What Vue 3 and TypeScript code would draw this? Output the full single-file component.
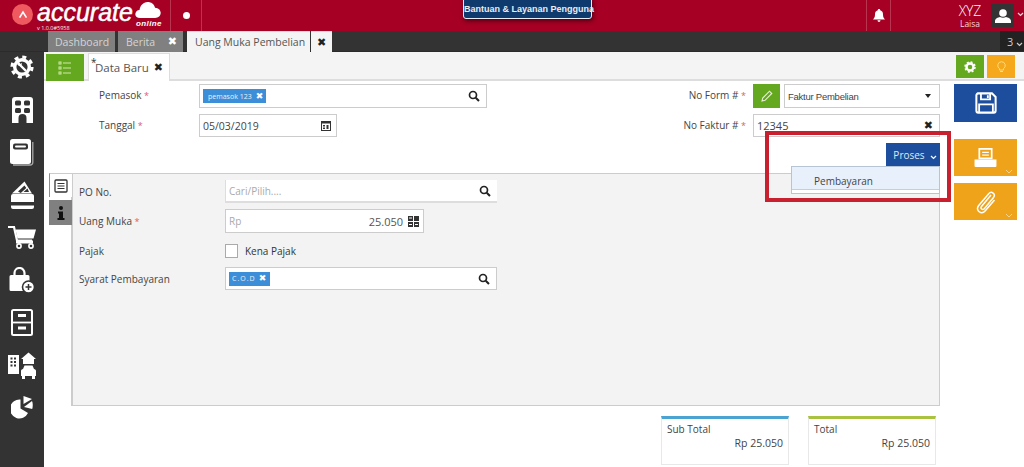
<script setup lang="ts">
interface NavIcon { id: string }
const navIcons: NavIcon[] = [
  { id: 'gear' }, { id: 'building' }, { id: 'book' }, { id: 'wallet' }, { id: 'cart' },
  { id: 'bag' }, { id: 'cabinet' }, { id: 'assets' }, { id: 'pie' },
]
</script>

<template>
  <div class="app">
    <header class="topbar">
      <div class="logo">
        <span class="logo-mark">
          <svg width="10" height="9" viewBox="0 0 16 12"><path d="M2.5 11 8 2l5.500 9" fill="none" stroke="#fff" stroke-width="2.600" /></svg>
        </span>
        <span class="logo-word">accurate</span>
        <span class="logo-cloud">
          <svg width="26" height="16" viewBox="0 0 27 17"><path d="M5 17c-3 0-5-1.800-5-4s2-4.500 4.500-4.500C5 4 8.500 0 13 0c4 0 7 2.200 8 6 3.500.2 6 2.500 6 5.500S24.500 17 21 17z" fill="#fff" /></svg>
          <em>online</em>
        </span>
        <span class="version">v 1.0.0#5958</span>
      </div>
      <div class="dot-cell"><span class="dot"></span></div>
      <div class="spacer"></div>
      <div class="bell-cell">
        <svg width="12" height="13" viewBox="0 0 12 13"><path d="M6 0c.8 0 1.200.5 1.200 1.200C9.300 1.800 10 3.500 10 5.500c0 2.500.8 3.500 2 5H0c1.200-1.500 2-2.500 2-5 0-2 .7-3.700 2.800-4.300C4.800.5 5.200 0 6 0zM4.500 11.300h3C7.400 12.300 6.800 13 6 13s-1.400-.7-1.500-1.700z" fill="#fff" /></svg>
      </div>
      <div class="user-name"><span class="xyz">XYZ</span><span class="laisa">Laisa</span></div>
      <div class="avatar">
        <svg width="16" height="14" viewBox="0 0 16 14"><circle cx="8" cy="4" r="3.800" fill="#fff" /><path d="M0 14v-2c0-2.500 3-3.500 5-4 1.800 1 4.200 1 6 0 2 .5 5 1.500 5 4v2z" fill="#fff" /></svg>
      </div>
      <svg class="user-chev" width="7" height="5" viewBox="0 0 7 5"><path d="m1 1 2.500 2.500L6 1" fill="none" stroke="#ddd" stroke-width="1.200" /></svg>
      <div class="help">Bantuan &amp; Layanan Pengguna</div>
    </header>

    <nav class="tabs">
      <div class="tab tab-dash">Dashboard</div>
      <div class="tab tab-news">Berita <b class="x">✖</b></div>
      <div class="tab tab-active">Uang Muka Pembelian</div>
      <div class="tab tab-close"><b class="x dark">✖</b></div>
      <div class="spacer"></div>
      <div class="tab-count">3<svg width="7" height="5" viewBox="0 0 7 5"><path d="m1 1 2.500 2.500L6 1" fill="none" stroke="#ccc" stroke-width="1.200" /></svg></div>
    </nav>

    <div class="body">
      <aside class="sidebar">
        <div v-for="icon in navIcons" :key="icon.id" class="nav-item">
          <svg v-if="icon.id === 'gear'" width="24" height="24" viewBox="0 0 24 24">
            <circle cx="12" cy="12" r="10" fill="none" stroke="#fff" stroke-width="3.200" stroke-dasharray="4 3.850" />
            <circle cx="12" cy="12" r="7.300" fill="none" stroke="#fff" stroke-width="3.400" />
            <path d="M8.500 8.500l7.500 7.500" stroke="#fff" stroke-width="2.400" />
            <path d="M7.200 9.200a3 3 0 0 1 3-3l-1 1.800 1 1 1.800-1a3 3 0 0 1-3 3z" fill="#fff" />
          </svg>
          <svg v-else-if="icon.id === 'building'" width="21" height="26" viewBox="0 0 21 26">
            <path d="M3 0h15a3 3 0 0 1 3 3v23h-6.500v-5a4 4 0 0 0-8 0v5H0V3a3 3 0 0 1 3-3z" fill="#fff" />
            <rect x="3" y="3.500" width="6" height="5" rx="1.500" fill="#333" /><rect x="12" y="3.500" width="6" height="5" rx="1.500" fill="#333" />
            <rect x="3" y="11" width="6" height="5" rx="1.500" fill="#333" /><rect x="12" y="11" width="6" height="5" rx="1.500" fill="#333" />
          </svg>
          <svg v-else-if="icon.id === 'book'" width="24" height="27" viewBox="0 0 24 27">
            <rect x="0" y="0" width="21" height="25" rx="2.500" fill="#fff" />
            <rect x="3" y="4.500" width="15" height="6" rx="2" fill="#333" />
            <rect x="5" y="6.500" width="11" height="2" rx="1" fill="#fff" />
            <path d="M22.800 3v20.500a2.500 2.500 0 0 1-2.500 2.500H3" fill="none" stroke="#aaa" stroke-width="1.300" />
          </svg>
          <svg v-else-if="icon.id === 'wallet'" width="23" height="28" viewBox="0 0 23 28">
            <path d="M1 12.500 13.500 0.500 21 12.500z" fill="#fff" />
            <path d="m7 10.500 6.500-6 1.800 2.600-5.500 4.800zM12.500 11l4-3.500 1.500 3.500z" fill="#333" />
            <path d="M2 13h19a2 2 0 0 1 2 2v11a2 2 0 0 1-2 2H2a2 2 0 0 1-2-2V15a2 2 0 0 1 2-2z" fill="#fff" />
            <rect x="0" y="21" width="23" height="3.500" fill="#333" />
          </svg>
          <svg v-else-if="icon.id === 'cart'" width="28" height="23" viewBox="0 0 28 23">
            <path d="M0 1h6l3 13.500h15" fill="none" stroke="#fff" stroke-width="2.200" />
            <path d="M7.500 3.500H28l-2.500 9H9.500z" fill="#fff" />
            <rect x="8" y="14.500" width="17" height="3" fill="#fff" />
            <circle cx="11" cy="20" r="2.100" fill="none" stroke="#fff" stroke-width="1.600" /><circle cx="23" cy="20" r="2.100" fill="none" stroke="#fff" stroke-width="1.600" />
          </svg>
          <svg v-else-if="icon.id === 'bag'" width="26" height="26" viewBox="0 0 26 26">
            <path d="M5.500 9V6a5 5 0 0 1 10 0v3" fill="none" stroke="#fff" stroke-width="2.200" />
            <path d="M2 8h17a1.500 1.500 0 0 1 1.500 1.500V24H2a1.500 1.500 0 0 1-1.500-1.500v-13A1.500 1.500 0 0 1 2 8z" fill="#fff" />
            <circle cx="19.500" cy="20" r="6" fill="#fff" stroke="#333" stroke-width="1.600" />
            <path d="M16.500 20h6M19.500 17v6" stroke="#333" stroke-width="1.500" />
          </svg>
          <svg v-else-if="icon.id === 'cabinet'" width="22" height="27" viewBox="0 0 22 27">
            <rect x="1" y="1" width="20" height="25" rx="1.500" fill="none" stroke="#fff" stroke-width="2" />
            <path d="M1 13.500h20" stroke="#fff" stroke-width="1.800" />
            <rect x="7" y="5" width="8" height="3" fill="#fff" /><rect x="7" y="17.500" width="8" height="3" fill="#fff" />
          </svg>
          <svg v-else-if="icon.id === 'assets'" width="28" height="29" viewBox="0 0 28 29">
            <path d="M0 4h11v19H0z" fill="#fff" />
            <path d="M2.500 6.500h2v2h-2zM6 6.500h2v2H6zM2.500 10h2v2h-2zM6 10h2v2H6zM2.500 13.500h2v2h-2zM6 13.500h2v2H6z" fill="#333" />
            <path d="m13 8 7.500-6.500L28 8h-2v5H15V8z" fill="#fff" />
            <path d="M15 18l1.500-3.500h8L26 18c1.200.3 2 1 2 2v5h-1v3h-3v-3h-7v3h-3v-3h-1v-5c0-1 .8-1.700 2-2z" fill="#fff" />
          </svg>
          <svg v-else width="22" height="23" viewBox="0 0 22 23">
            <path d="M9.500 3.500v9l7.500 4.500a9.500 9.500 0 1 1-7.500-13.500z" fill="#fff" />
            <path d="M12.500 8V0L21 3z" fill="#fff" />
            <path d="M13 11l8-6c1 2 1 6 .2 8z" fill="#fff" />
          </svg>
        </div>
      </aside>

      <main class="main">
        <div class="toolbar">
          <button class="list-btn" type="button">
            <svg width="14" height="14" viewBox="0 0 14 14"><g fill="none" stroke="#cfe8a8" stroke-width="1"><rect x="1" y="1" width="2" height="2" /><rect x="1" y="6" width="2" height="2" /><rect x="1" y="11" width="2" height="2" /><path d="M5 2h8M5 7h8M5 12h8" /></g></svg>
          </button>
          <div class="doc-tab"><sup>*</sup>Data Baru <b class="x dark">✖</b></div>
          <div class="spacer"></div>
          <button class="tool-btn green" type="button">
            <svg width="12" height="12" viewBox="0 0 12 12"><circle cx="6" cy="6" r="3.500" fill="none" stroke="#fff" stroke-width="2.400" /><circle cx="6" cy="6" r="5" fill="none" stroke="#fff" stroke-width="1.500" stroke-dasharray="2 1.930" /></svg>
          </button>
          <button class="tool-btn amber" type="button">
            <svg width="9" height="12" viewBox="0 0 9 12"><path d="M4.500.7a3.800 3.800 0 0 0-2 7V9h4V7.700a3.800 3.800 0 0 0-2-7zM3 10.500h3" fill="none" stroke="#f8dc8a" stroke-width="1" /></svg>
          </button>
        </div>

        <div class="content">
          <div class="work">
            <section class="head-form">
              <div class="head-col left">
                <div class="field-row">
                  <label class="head-label">Pemasok <i>*</i></label>
                  <div class="input wide tags">
                    <span class="chip">pemasok 123 <b class="x">✖</b></span>
                    <svg class="search" width="12" height="12" viewBox="0 0 12 12"><circle cx="5" cy="5" r="3.500" fill="none" stroke="#222" stroke-width="1.700" /><path d="m7.700 7.700 3.300 3.300" stroke="#222" stroke-width="2" /></svg>
                  </div>
                </div>
                <div class="field-row low">
                  <label class="head-label">Tanggal <i>*</i></label>
                  <div class="input date">
                    <span>05/03/2019</span>
                    <svg width="10" height="10" viewBox="0 0 10 10"><path d="M0 0h10v10H0z" fill="#333" /><path d="M1 2.500h8v6.500H1z" fill="#fff" /><path d="M2 4h2v1.500H2zM5.500 4h2v4h-2zM2 6.500h2V8H2z" fill="#333" /></svg>
                  </div>
                </div>
              </div>
              <div class="head-col right">
                <div class="field-row">
                  <label class="right-label">No Form # <i>*</i></label>
                  <button class="pencil" type="button">
                    <svg width="12" height="12" viewBox="0 0 12 12"><path d="M1 11l.7-3L8.500 1.200l2.300 2.300L4 10.300z" fill="none" stroke="#e6f2d2" stroke-width="1.100" /></svg>
                  </button>
                  <div class="input select"><span>Faktur Pembelian</span><em class="caret"></em></div>
                </div>
                <div class="field-row low">
                  <label class="right-label">No Faktur # <i>*</i></label>
                  <div class="input faktur"><span>12345</span><b class="x dark">✖</b></div>
                </div>
                <div class="proses-row">
                  <button class="proses" type="button">Proses
                    <svg width="7" height="5" viewBox="0 0 7 5"><path d="m1 1 2.500 2.500L6 1" fill="none" stroke="#fff" stroke-width="1.200" /></svg>
                  </button>
                  <div class="proses-menu"><div class="menu-item">Pembayaran</div></div>
                  <div class="callout"></div>
                </div>
              </div>
            </section>

            <section class="detail">
              <div class="side-tabs">
                <div class="side-tab on">
                  <svg width="14" height="14" viewBox="0 0 14 14"><rect x="1" y="1" width="12" height="12" rx="1" fill="none" stroke="#333" stroke-width="1.300" /><path d="M3.500 4.500h7M3.500 7h7M3.500 9.500h7" stroke="#333" stroke-width="1.200" /></svg>
                </div>
                <div class="side-tab off">
                  <svg width="8" height="14" viewBox="0 0 8 14"><circle cx="4" cy="2" r="2" fill="#111" /><path d="M1 5.500h5V12h1.500v2H.5v-2H2V7.500H1z" fill="#111" /></svg>
                </div>
              </div>
              <div class="panel">
                <div class="p-row r1">
                  <label>PO No.</label>
                  <div class="input po"><span class="ph">Cari/Pilih....</span>
                    <svg class="search" width="12" height="12" viewBox="0 0 12 12"><circle cx="5" cy="5" r="3.500" fill="none" stroke="#222" stroke-width="1.700" /><path d="m7.700 7.700 3.300 3.300" stroke="#222" stroke-width="2" /></svg>
                  </div>
                </div>
                <div class="p-row r2">
                  <label>Uang Muka <i>*</i></label>
                  <div class="input money"><span class="ph">Rp</span><span class="amt">25.050</span>
                    <svg width="11" height="11" viewBox="0 0 11 11"><path d="M0 0h5v5H0zM6 0h5v5H6zM0 6h5v5H0zM6 6h5v5H6z" fill="#333" /><path d="M1 1.500h3v1H1zM1 8h3v1H1zM7 8h3v1H7z" fill="#fff" /></svg>
                  </div>
                </div>
                <div class="p-row r3">
                  <label>Pajak</label>
                  <span class="check"></span><span class="check-text">Kena Pajak</span>
                </div>
                <div class="p-row r4">
                  <label>Syarat Pembayaran</label>
                  <div class="input po tags">
                    <span class="chip cod">C.O.D <b class="x">✖</b></span>
                    <svg class="search" width="12" height="12" viewBox="0 0 12 12"><circle cx="5" cy="5" r="3.500" fill="none" stroke="#222" stroke-width="1.700" /><path d="m7.700 7.700 3.300 3.300" stroke="#222" stroke-width="2" /></svg>
                  </div>
                </div>
              </div>
            </section>

            <section class="totals">
              <div class="total-card blue"><div>Sub Total</div><div class="total-val">Rp 25.050</div></div>
              <div class="total-card lime"><div>Total</div><div class="total-val">Rp 25.050</div></div>
            </section>
          </div>

          <aside class="actions">
            <button class="act save" type="button">
              <svg width="22" height="22" viewBox="0 0 24 24"><path d="M2.500 1.500h16l4 4v15a2 2 0 0 1-2 2h-17a2 2 0 0 1-2-2v-17a2 2 0 0 1 2-2z" fill="none" stroke="#fff" stroke-width="2.200" /><path d="M6.500 2v6h10V2M14 3.500v3M4.500 22v-8.500h15V22" fill="none" stroke="#fff" stroke-width="2" /></svg>
            </button>
            <button class="act orange first" type="button">
              <svg width="23" height="20" viewBox="0 0 23 21"><path d="M5 1h13v10H5z" fill="none" stroke="#fff" stroke-width="1.800" /><path d="M8 4.500h7M8 7.500h7" stroke="#fff" stroke-width="1.300" /><path d="M0 12h23v7a1 1 0 0 1-1 1H1a1 1 0 0 1-1-1z" fill="#fff" /></svg>
              <svg class="act-chev" width="8" height="5" viewBox="0 0 8 5"><path d="m1 1 3 3 3-3" fill="none" stroke="#f7d48c" stroke-width="1" /></svg>
            </button>
            <button class="act orange" type="button">
              <svg width="21" height="25" viewBox="0 0 21 25"><path d="M16 6 6.500 17.500c-1.500 2 1 4 2.800 2.300L18.500 8.500c2.600-3.500-2-7-4.800-3.800L3.500 16.800c-3.500 4.700 3 9.500 6.800 5L19.500 11" fill="none" stroke="#fff" stroke-width="1.500" /></svg>
              <svg class="act-chev" width="8" height="5" viewBox="0 0 8 5"><path d="m1 1 3 3 3-3" fill="none" stroke="#f7d48c" stroke-width="1" /></svg>
            </button>
          </aside>
        </div>
      </main>
    </div>
  </div>
</template>

<style>
html, body { margin: 0; padding: 0; background: #fff; }
</style>

<style scoped>
* { box-sizing: border-box; }
.app {
  width: 1024px; height: 467px; overflow: hidden; position: relative;
  display: grid; grid-template-rows: 31px 21px 1fr;
  font-family: "Open Sans", "Liberation Sans", sans-serif; font-size: 10px; color: #444;
}
.spacer { flex: 1; }
button { border: 0; padding: 0; margin: 0; font: inherit; cursor: pointer; }
i { color: #d9606a; font-style: normal; font-size: 9px; }
.x { font-size: 11px; line-height: 1; font-family: "DejaVu Sans", sans-serif; font-weight: 400; color: #fff; }
.x.dark { color: #222; }

.topbar { background: #a60024; display: flex; align-items: stretch; position: relative; color: #fff; }
.logo { width: 170px; position: relative; display: flex; align-items: flex-start; padding-left: 12px; }
.logo-mark { width: 21px; height: 21px; border-radius: 50%; background: #ee5a5f; display: flex; align-items: center; justify-content: center; margin: 4px 4px 0 0; flex: none; }
.logo-word { font: italic 400 25px/24px "Liberation Sans", sans-serif; -webkit-text-stroke: .5px #fff; }
.logo-cloud { position: absolute; left: 135px; top: 2px; width: 27px; height: 27px; }
.logo-cloud svg { display: block; }
.logo-cloud em { position: absolute; top: 18px; left: 1px; font: italic 700 8px/8px "Liberation Sans", sans-serif; letter-spacing: .4px; color: #fff; }
.version { position: absolute; left: 37px; top: 25px; font-size: 5.500px; line-height: 6px; color: #eee; white-space: nowrap; }
.dot-cell { width: 32px; display: flex; align-items: center; justify-content: center; border-left: 1px solid #b8354f; border-right: 1px solid #b8354f; }
.dot { width: 7px; height: 7px; border-radius: 50%; background: #fff; }
.bell-cell { width: 25px; margin-right: 66px; display: flex; align-items: center; justify-content: center; border-left: 1px solid #b8354f; border-right: 1px solid #b8354f; }
.user-name { width: 26px; display: flex; flex-direction: column; align-items: center; margin-right: 8px; padding-top: 4px; }
.xyz { font-size: 14px; line-height: 13px; font-weight: 300; letter-spacing: -0.2px; }
.laisa { font-size: 8.500px; line-height: 9px; margin-top: 2px; color: #f2d8dd; }
.avatar { width: 23px; height: 23px; margin-top: 4px; background: #333; display: flex; align-items: center; justify-content: center; }
.user-chev { margin: 12px 0 0 3px; }
.help {
  position: absolute; left: 463px; top: -3px; width: 129px; height: 22px; border: 1px solid #e8edf3; border-radius: 3px;
  background: #0f3a6e; color: #e8eef5; font: 700 9px/20px "Liberation Sans", sans-serif; text-align: center; padding-top: 1px;
  box-shadow: 1px 2px 4px rgba(0,0,0,.5); white-space: nowrap;
}

.tabs { background: #333; display: flex; padding-left: 48px; border-bottom: 1px solid #2b2b2b; }
.tab { height: 21px; background: #808080; color: #d4d4d4; display: flex; align-items: center; font-size: 10.500px; }
.tab-dash { width: 67px; padding-left: 7px; margin-right: 3px; }
.tab-news { width: 65px; padding-left: 8px; margin-right: 4px; justify-content: space-between; padding-right: 6px; }
.tab-active { width: 123px; background: #f4f4f4; color: #555; padding-left: 8px; border-top: 1px solid #c5e0ef; margin-right: 1px; white-space: nowrap; }
.tab-close { width: 21px; background: #f4f4f4; justify-content: center; border-top: 1px solid #c5e0ef; }
.tab-count { width: 24px; background: #222; color: #ccc; font-size: 11px; display: flex; align-items: center; padding-left: 7px; gap: 3px; }
.tab-count svg { margin-top: 6px; }

.body { display: grid; grid-template-columns: 44px 1fr; min-height: 0; }
.sidebar { background: #333; display: flex; flex-direction: column; gap: 12.600px; }
.nav-item { height: 30px; display: flex; align-items: center; justify-content: center; }

.main { display: flex; flex-direction: column; min-width: 0; }
.toolbar { height: 29px; background: #f4f4f4; border-bottom: 2px solid #ddd; display: flex; align-items: flex-start; padding: 2px 9px 0 2px; }
.list-btn { width: 38px; height: 27px; background: #64a820; display: flex; align-items: center; justify-content: center; }
.doc-tab {
  width: 82px; height: 28px; margin: -1px 0 0 4px; background: #fff; border: 1px solid #ddd; border-bottom: 0;
  color: #555; font-size: 11.500px; display: flex; align-items: center; padding-left: 6px; white-space: nowrap; gap: 5px; position: relative;
}
.doc-tab sup { position: absolute; left: 2px; top: 3px; font-size: 10px; line-height: 1; color: #333; }
.tool-btn { width: 28px; height: 23px; margin: 1px 0 0 3px; display: flex; align-items: center; justify-content: center; }
.green { background: #64a820; }
.amber { background: #f5a81c; }

.content { flex: 1; display: grid; grid-template-columns: 896px 1fr; min-height: 0; }
.work { display: flex; flex-direction: column; }
.head-form { height: 92px; display: flex; justify-content: space-between; padding-top: 3px; }
.field-row { display: flex; align-items: center; height: 24px; }
.field-row.low { margin-top: 6px; height: 23px; }
.head-col.left { padding-left: 55px; }
.head-label { width: 100px; color: #444; padding-bottom: 2px; }
.input { background: #fff; border: 1px solid #ccc; display: flex; align-items: center; padding: 0 6px; color: #444; position: relative; }
.wide { width: 288px; height: 24px; }
.tags { justify-content: space-between; padding-left: 3px; }
.search { flex: none; }
.date { width: 138px; height: 23px; justify-content: space-between; padding-left: 3px; padding-right: 5px; font-size: 10.500px; }
.chip { background: #3d8ed8; color: #e8f2fb; height: 14px; font-size: 7px; display: inline-flex; align-items: center; gap: 4px; padding: 0 3px 0 5px; white-space: nowrap; }
.chip .x { font-size: 9px; }
.chip.cod { letter-spacing: 1px; padding: 0 3px; gap: 3px; }
.head-col.right { position: relative; width: 300px; display: flex; flex-direction: column; align-items: flex-end; }
.right-label { color: #444; margin-right: 7px; white-space: nowrap; padding-bottom: 2px; }
.pencil { width: 27px; height: 24px; background: #64a820; display: flex; align-items: center; justify-content: center; margin-right: 4px; }
.select { width: 156px; height: 24px; justify-content: space-between; font: 9.500px "Liberation Sans", sans-serif; letter-spacing: -.25px; padding: 0 8px 0 3px; }
.caret { width: 0; height: 0; border-left: 3px solid transparent; border-right: 3px solid transparent; border-top: 4px solid #222; }
.faktur { width: 187px; height: 23px; justify-content: space-between; font-size: 11px; padding-left: 3px; padding-right: 6px; }
.proses-row { position: relative; width: 175px; margin-top: 6px; display: flex; justify-content: flex-end; }
.proses { width: 54px; height: 23px; background: #1c4e9d; color: #dfe8f5; font-size: 10px; display: flex; align-items: center; justify-content: center; gap: 5px; padding-left: 4px; }
.proses svg { margin-top: 6px; }
.proses-menu { position: absolute; right: 0; top: 23px; width: 149px; height: 28px; background: #fff; border: 1px solid #b7c4d4; z-index: 2; }
.menu-item { height: 23px; background: #e8f0fb; padding-left: 22px; line-height: 29px; color: #444; border-bottom: 1px solid #bfd0e6; }
.callout { position: absolute; left: 0; top: -12px; width: 186px; height: 71px; border: 4px solid #c8202f; z-index: 3; pointer-events: none; }

.detail { display: flex; height: 233px; padding-left: 5px; }
.side-tabs { width: 22px; flex: none; display: flex; flex-direction: column; gap: 3px; }
.side-tab { width: 23px; height: 24px; display: flex; align-items: center; justify-content: center; position: relative; z-index: 1; }
.side-tab.on { background: #fff; border-left: 1px solid #4aa3d0; border-top: 1px solid #ccc; }
.side-tab.off { background: #808080; height: 25px; }
.panel { flex: 1; background: #f3f3f3; border: 1px solid #ccc; border-left-width: 2px; padding: 6px 0 0 6px; }
.p-row { display: flex; align-items: center; }
.p-row label { width: 146px; color: #444; white-space: nowrap; }
.r1 { height: 23px; }
.r2 { height: 24px; margin-top: 6px; }
.r3 { height: 16px; margin-top: 10px; }
.r4 { height: 23px; margin-top: 8px; }
.po { width: 272px; height: 23px; justify-content: space-between; padding-left: 3px; }
.r1 .po { border-width: 0 0 2px 1px; border-color: #ddd; }
.ph { color: #aaa; font-size: 10px; }
.money { width: 199px; height: 24px; padding-left: 3px; padding-right: 4px; gap: 5px; }
.amt { margin-left: auto; font-size: 11px; color: #555; }
.check { width: 13px; height: 14px; background: #fff; border: 1px solid #aaa; }
.check-text { margin-left: 7px; color: #333; }

.totals { display: flex; justify-content: flex-end; gap: 19px; padding: 10px 4px 0 0; }
.total-card { width: 128px; height: 49px; background: #fff; border: 1px solid #e8e8e8; border-top: 3px solid; padding: 3px 5px; line-height: 14px; color: #444; }
.blue { border-top-color: #4aa3d0; }
.lime { border-top-color: #a9c23f; }
.total-val { text-align: right; font-size: 10.500px; }

.actions { padding: 3px 0 0 14px; display: flex; flex-direction: column; }
.act { width: 63px; display: flex; align-items: center; justify-content: center; position: relative; }
.save { height: 38px; background: #1c4e9d; }
.orange { height: 37px; background: #efa31a; margin-top: 7px; }
.orange.first { margin-top: 17px; }
.act-chev { position: absolute; right: 4px; bottom: 2px; }
</style>
